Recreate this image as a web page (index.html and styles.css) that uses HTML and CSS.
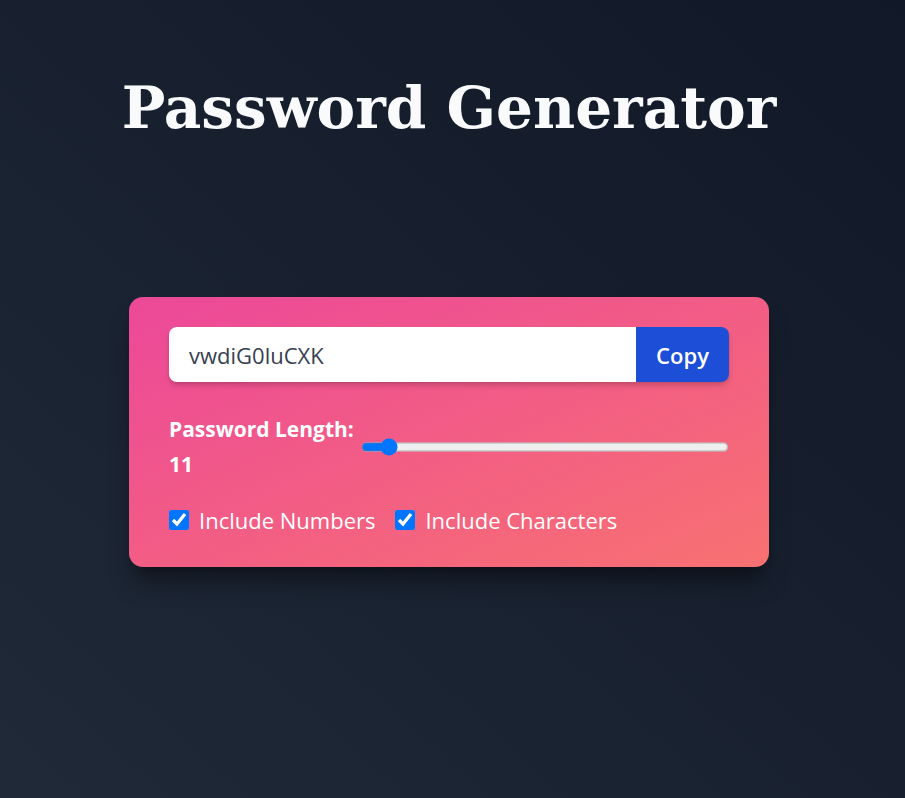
FILE: index.html
```html
<!DOCTYPE html>
<html lang="en">
<head>
<meta charset="utf-8">
<title>Password Generator</title>
<link rel="stylesheet" href="styles.css">
</head>
<body>
<main class="page">
  <h1 class="title">Password Generator</h1>
  <section class="card">
    <div class="output-row">
      <input class="output" type="text" value="vwdiG0luCXK" readonly>
      <button class="copy">Copy</button>
    </div>
    <div class="length-row">
      <label class="length-label">Password Length: 11</label>
      <input class="slider" type="range" min="6" max="100" value="11">
    </div>
    <div class="options">
      <label class="option"><input class="check" type="checkbox" checked> Include Numbers</label>
      <label class="option"><input class="check" type="checkbox" checked> Include Characters</label>
    </div>
  </section>
</main>
</body>
</html>
```
FILE: styles.css
```css
* { box-sizing: border-box; }
html, body { margin: 0; padding: 0; }
body {
  min-height: 100vh;
  background: linear-gradient(to top right, #1f2937, #111827);
  font-family: "Open Sans", "Noto Sans", sans-serif;
  color: #fff;
}
.page {
  display: flex;
  flex-direction: column;
  align-items: center;
  padding-top: 70px;
  padding-right: 7px;
}
.title {
  margin: 0;
  font-family: "DejaVu Serif", serif;
  font-weight: bold;
  font-size: 58px;
  line-height: 76px;
  color: #f9fafb;
}
.card {
  margin-top: 151px;
  width: 640px;
  padding: 30px 40px 32px;
  border-radius: 14px;
  background: linear-gradient(to bottom right, #ec4899, #f87171);
  box-shadow: 0 20px 25px -5px rgba(0,0,0,0.35), 0 8px 10px -6px rgba(0,0,0,0.3);
}
.output-row {
  display: flex;
  height: 55px;
  border-radius: 8px;
  overflow: hidden;
  box-shadow: 0 4px 6px -1px rgba(0,0,0,0.18), 0 2px 4px -2px rgba(0,0,0,0.12);
}
.output {
  flex: 1;
  min-width: 0;
  border: 0;
  outline: none;
  padding: 0 20px;
  font-family: inherit;
  font-size: 22px;
  color: #374151;
  background: #fff;
}
.copy {
  width: 93px;
  border: 0;
  padding: 0;
  background: #1d4ed8;
  color: #fff;
  font-family: inherit;
  font-size: 22px;
  font-weight: 600;
}
.length-row {
  display: flex;
  align-items: center;
  gap: 6px;
  margin-top: 30px;
}
.length-label {
  width: 186px;
  flex: none;
  font-size: 21px;
  font-weight: 700;
  line-height: 35px;
}
.slider {
  flex: 1;
  min-width: 0;
  margin: 0;
  accent-color: #0075ff;
  zoom: 1.12;
}
.options {
  display: flex;
  gap: 20px;
  margin-top: 23px;
}
.option {
  display: flex;
  align-items: center;
  gap: 10px;
  font-size: 22px;
  line-height: 30px;
}
.check {
  width: 20px;
  height: 20px;
  margin: 0;
  accent-color: #0075ff;
}
```
